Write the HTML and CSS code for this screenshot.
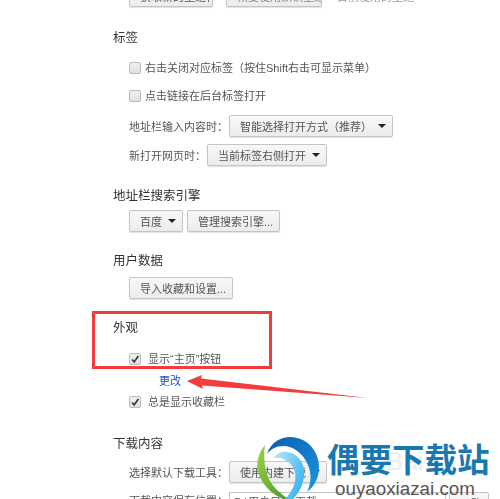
FILE: index.html
```html
<!DOCTYPE html>
<html>
<head>
    <title>设置</title>
    <meta name="viewport" content="width=device-width, initial-scale=1">
    <link rel="stylesheet" href="styles.css">
</head>
<body>
    <div class="settings">
        <div class="top-row">
            <div class="btn theme-get">获取新的主题背景</div>
            <div class="btn theme-reset">恢复使用默认主题背景</div>
            <span class="hint">目前使用的主题</span>
        </div>

        <section class="tabs">
            <h3>标签</h3>
            <div class="check-row"><span class="box"></span>右击关闭对应标签（按住Shift右击可显示菜单）</div>
            <div class="check-row"><span class="box"></span>点击链接在后台标签打开</div>
            <div class="field-row">
                <span class="field-label">地址栏输入内容时：</span>
                <div class="btn select select-wide">智能选择打开方式（推荐）<i class="caret"></i></div>
            </div>
            <div class="field-row">
                <span class="field-label">新打开网页时：</span>
                <div class="btn select select-mid">当前标签右侧打开<i class="caret"></i></div>
            </div>
        </section>

        <section class="search">
            <h3>地址栏搜索引擎</h3>
            <div class="btn-row">
                <div class="btn select select-small">百度<i class="caret"></i></div>
                <div class="btn manage">管理搜索引擎...</div>
            </div>
        </section>

        <section class="data">
            <h3>用户数据</h3>
            <div class="btn import">导入收藏和设置...</div>
        </section>

        <section class="look">
            <h3>外观</h3>
            <div class="check-row home-row">
                <span class="box"><svg viewBox="0 0 12 12"><path d="M2.5 6.5 5 9.5 10 2.5" /></svg></span>显示“主页”按钮
            </div>
            <a class="change-link">更改</a>
            <div class="check-row">
                <span class="box"><svg viewBox="0 0 12 12"><path d="M2.5 6.5 5 9.5 10 2.5" /></svg></span>总是显示收藏栏
            </div>
        </section>

        <section class="downloads">
            <h3>下载内容</h3>
            <div class="field-row">
                <span class="field-label">选择默认下载工具：</span>
                <div class="btn select select-tool">使用内建下载<i class="caret"></i></div>
            </div>
            <div class="field-row path-row">
                <span class="field-label">下载内容保存位置：</span>
                <div class="path-input">D:\用户目录\下载</div>
                <div class="btn path-change">更改</div>
            </div>
        </section>
    </div>

    <!-- annotations on top of the screenshot -->
    <div class="red-box"></div>
    <svg class="arrow" viewBox="0 0 200 40">
        <polygon points="17,21 32,15 31,18.5 198,38 32,25.5 33,29" />
    </svg>

    <div class="watermark">Bai</div>
    <svg class="logo" viewBox="0 0 80 69">
        <defs>
            <linearGradient id="blueArc" x1="0" y1="0" x2="1" y2="1">
                <stop offset="0" stop-color="#0b5cb0" />
                <stop offset="1" stop-color="#1a97e0" />
            </linearGradient>
            <linearGradient id="greenArc" x1="0" y1="0" x2="1" y2="1">
                <stop offset="0" stop-color="#a5d04a" />
                <stop offset="1" stop-color="#3f9e1e" />
            </linearGradient>
            <linearGradient id="skyArc" x1="0" y1="0" x2="1" y2="0.6">
                <stop offset="0" stop-color="#bfe8fb" />
                <stop offset="1" stop-color="#3db6f2" />
            </linearGradient>
        </defs>
        <path fill="url(#greenArc)" d="M15 15C7 24 5 38 10 47 15 58 24 65 33 69L38 69C30 63 24 58 20 51 15 42 13 28 15 15Z" />
        <path fill="url(#blueArc)" d="M17 24C21 12 31 7 40 7 57 7 69 21 69 37 69 47 65 56 57 62 61 54 62 44 58 35 53 23 43 16 33 16 26 16 21 19 17 24Z" />
        <path fill="url(#skyArc)" d="M23 28C27 23 32 21 37 22 46 23 53 30 54 40 55 51 50 62 43 69L35 69C42 62 47 52 45 42 43 33 33 26 23 28Z" />
    </svg>
    <div class="brand">
        <div class="brand-name">偶要下载站</div>
        <div class="brand-url">ouyaoxiazai.com</div>
    </div>
</body>
</html>
```

FILE: styles.css
```css
html, body {
    margin: 0;
    height: 499px;
    overflow: hidden;
    background: #fff;
}
body {
    position: relative;
    font-family: "Liberation Sans", "Noto Sans CJK SC", sans-serif;
}
.settings {
    padding-left: 113px;
    color: #555;
    font-size: 11px;
    filter: blur(0.55px);
}
h3 {
    margin: 0;
    font-size: 12.5px;
    line-height: 18px;
    font-weight: normal;
    color: #333;
}
.btn {
    box-sizing: border-box;
    display: flex;
    align-items: center;
    height: 22px;
    padding: 0 6px 0 10px;
    border: 1px solid #c4c4c4;
    border-radius: 2px;
    background: linear-gradient(#f8f8f8, #ececec);
    box-shadow: 0 1px 1px rgba(0, 0, 0, 0.12);
    color: #555;
    white-space: nowrap;
}
.top-row {
    display: flex;
    align-items: center;
    gap: 13px;
    margin: -15px 0 0 16px;
}
.theme-get {
    width: 84px;
    overflow: hidden;
}
.theme-reset {
    width: 96px;
    overflow: hidden;
    color: #888;
}
.hint {
    margin-left: 2px;
    color: #999;
}
.tabs {
    margin-top: 22px;
}
.check-row {
    display: flex;
    align-items: center;
    height: 18px;
    margin: 10px 0 0 16px;
    line-height: 18px;
}
.tabs h3 + .check-row {
    margin-top: 12px;
}
.box {
    box-sizing: border-box;
    flex: none;
    width: 12px;
    height: 12px;
    margin-right: 4px;
    border: 1px solid #bbb;
    border-radius: 2px;
    background: linear-gradient(#f0f0f0, #e0e0e0);
}
.box svg {
    display: block;
    width: 10px;
    height: 10px;
    fill: none;
    stroke: #333;
    stroke-width: 2;
}
.field-row {
    display: flex;
    align-items: center;
    height: 22px;
    margin: 7px 0 0 16px;
}
.tabs .check-row + .field-row {
    margin-top: 10px;
}
.field-label {
    white-space: nowrap;
}
.select {
    justify-content: space-between;
}
.caret {
    flex: none;
    width: 0;
    height: 0;
    border: 4px solid transparent;
    border-top: 4px solid #222;
    border-bottom: 0;
}
.select-wide {
    width: 164px;
    margin-left: 1px;
}
.select-mid {
    width: 120px;
    margin-left: 1px;
}
.search {
    margin-top: 21px;
}
.btn-row {
    display: flex;
    gap: 4px;
    margin: 5px 0 0 16px;
}
.select-small {
    width: 54px;
}
.manage {
    width: 93px;
}
.data {
    margin-top: 20px;
}
.import {
    width: 104px;
    margin: 7px 0 0 16px;
}
.look {
    margin-top: 20px;
}
.home-row {
    margin-top: 13px;
}
.look .box {
    margin-right: 7px;
}
.change-link {
    display: block;
    margin: 4px 0 0 46px;
    line-height: 18px;
    color: #1a53c4;
}
.look .change-link + .check-row {
    margin-top: 3px;
}
.downloads {
    margin-top: 24px;
}
.downloads .field-row:first-of-type {
    margin-top: 8px;
}
.select-tool {
    width: 98px;
    margin-left: 1px;
}
.path-row {
    align-items: flex-start;
    margin-top: 9px;
}
.path-row .field-label {
    line-height: 18px;
}
.path-input {
    box-sizing: border-box;
    width: 217px;
    height: 22px;
    margin-left: 1px;
    padding: 0 4px;
    border: 1px solid #c4c4c4;
    line-height: 18px;
}
.path-change {
    margin-left: 3px;
}
.red-box {
    position: absolute;
    left: 92px;
    top: 311px;
    width: 174px;
    height: 52px;
    border: 3px solid #f43c3c;
}
.arrow {
    position: absolute;
    left: 170px;
    top: 360px;
    width: 200px;
    height: 40px;
    fill: #f43c3c;
}
.logo {
    position: absolute;
    left: 250px;
    top: 430px;
    width: 80px;
    height: 69px;
}
.watermark {
    position: absolute;
    left: 386px;
    top: 446px;
    font-size: 26px;
    color: #eeeeee;
}
.brand {
    position: absolute;
    left: 327px;
    top: 441px;
    width: 165px;
}
.brand-name {
    font-size: 32.5px;
    line-height: 40px;
    font-weight: bold;
    color: #1a78b0;
    white-space: nowrap;
}
.brand-url {
    margin: -1px 0 0 8px;
    font-size: 18.8px;
    line-height: 18px;
    color: #555;
    white-space: nowrap;
}
```
